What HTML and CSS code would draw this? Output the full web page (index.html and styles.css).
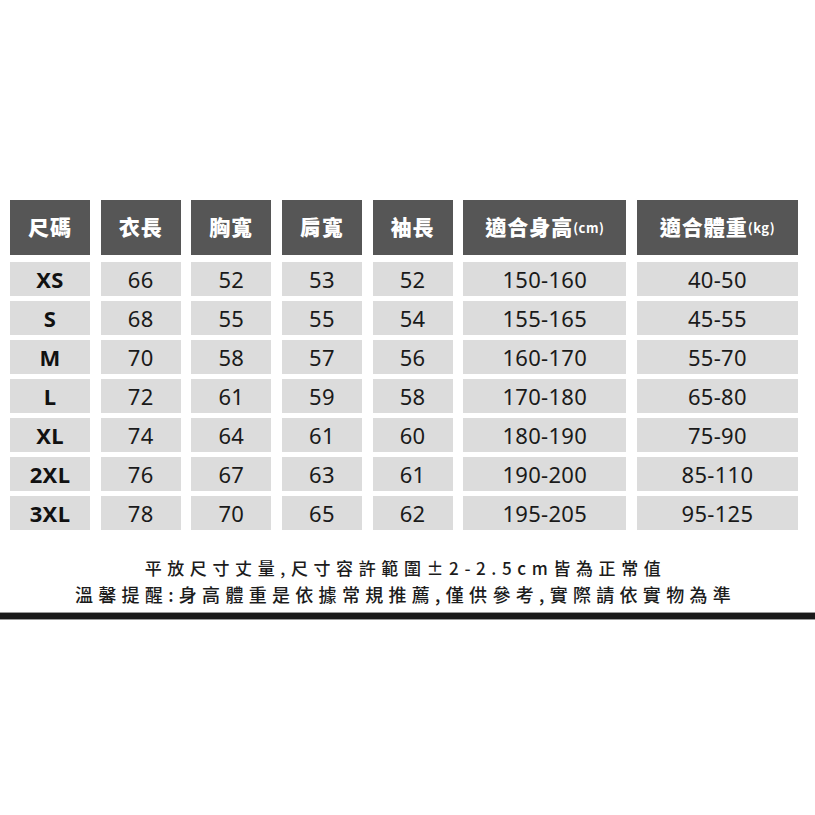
FILE: index.html
```html
<!DOCTYPE html>
<html lang="zh-Hant">
<head>
<meta charset="utf-8">
<title>尺碼表</title>
<link rel="stylesheet" href="styles.css">
</head>
<body>
<div class="page">
  <div class="grid head">
    <div class="h">尺碼</div>
    <div class="h">衣長</div>
    <div class="h">胸寬</div>
    <div class="h">肩寬</div>
    <div class="h">袖長</div>
    <div class="h">適合身高<span class="unit">(cm)</span></div>
    <div class="h">適合體重<span class="unit">(kg)</span></div>
  </div>
  <div class="grid body">
    <div class="c size">XS</div><div class="c">66</div><div class="c">52</div><div class="c">53</div><div class="c">52</div><div class="c">150-160</div><div class="c">40-50</div>
    <div class="c size">S</div><div class="c">68</div><div class="c">55</div><div class="c">55</div><div class="c">54</div><div class="c">155-165</div><div class="c">45-55</div>
    <div class="c size">M</div><div class="c">70</div><div class="c">58</div><div class="c">57</div><div class="c">56</div><div class="c">160-170</div><div class="c">55-70</div>
    <div class="c size">L</div><div class="c">72</div><div class="c">61</div><div class="c">59</div><div class="c">58</div><div class="c">170-180</div><div class="c">65-80</div>
    <div class="c size">XL</div><div class="c">74</div><div class="c">64</div><div class="c">61</div><div class="c">60</div><div class="c">180-190</div><div class="c">75-90</div>
    <div class="c size">2XL</div><div class="c">76</div><div class="c">67</div><div class="c">63</div><div class="c">61</div><div class="c">190-200</div><div class="c">85-110</div>
    <div class="c size">3XL</div><div class="c">78</div><div class="c">70</div><div class="c">65</div><div class="c">62</div><div class="c">195-205</div><div class="c">95-125</div>
  </div>
  <p class="note n1">平放尺寸丈量,尺寸容許範圍±2-2.5cm皆為正常值</p>
  <p class="note n2">溫馨提醒:身高體重是依據常規推薦,僅供參考,實際請依實物為準</p>
</div>
<div class="rule"></div>
</body>
</html>
```

FILE: styles.css
```css
html, body {
  margin: 0;
  padding: 0;
  background: #ffffff;
}
body {
  font-family: "Noto Sans CJK TC", "Noto Sans", sans-serif;
  color: #1c1c1c;
}
.page {
  padding: 200px 0 0 10px;
}
.grid {
  display: grid;
  grid-template-columns: 80px 80px 80px 80px 80px 163px 161px;
  column-gap: 10.67px;
}
.head {
  margin-bottom: 7px;
}
.h {
  height: 55px;
  background: #565656;
  color: #ffffff;
  font-weight: 900;
  font-size: 21px;
  display: flex;
  align-items: center;
  justify-content: center;
  padding-bottom: 3px;
  box-sizing: border-box;
  letter-spacing: 1px;
}
.unit {
  font-size: 13px;
  font-weight: 700;
  letter-spacing: 0.5px;
  margin-top: 3px;
}
.body {
  grid-auto-rows: 34px;
  row-gap: 5px;
}
.c {
  background: #dcdcdc;
  display: flex;
  align-items: center;
  justify-content: center;
  font-family: "Noto Sans", "Noto Sans CJK TC", sans-serif;
  font-size: 22px;
  letter-spacing: 0.3px;
  color: #1a1a1a;
  line-height: 1;
}
.size {
  font-weight: 700;
  color: #111111;
}
.note {
  margin: 0;
  text-align: center;
  color: #1c1c1c;
  line-height: 27px;
  padding-right: 14px;
}
.n1 {
  margin-top: 24px;
  font-size: 17px;
  letter-spacing: 5.6px;
  font-weight: 500;
}
.n2 {
  font-size: 18px;
  letter-spacing: 5.3px;
  font-weight: 500;
}
.rule {
  margin-top: 4px;
  height: 6px;
  background: #1a1a1a;
  border-top: 1px solid #9a9a9a;
  border-bottom: 1px solid #9a9a9a;
}
```
